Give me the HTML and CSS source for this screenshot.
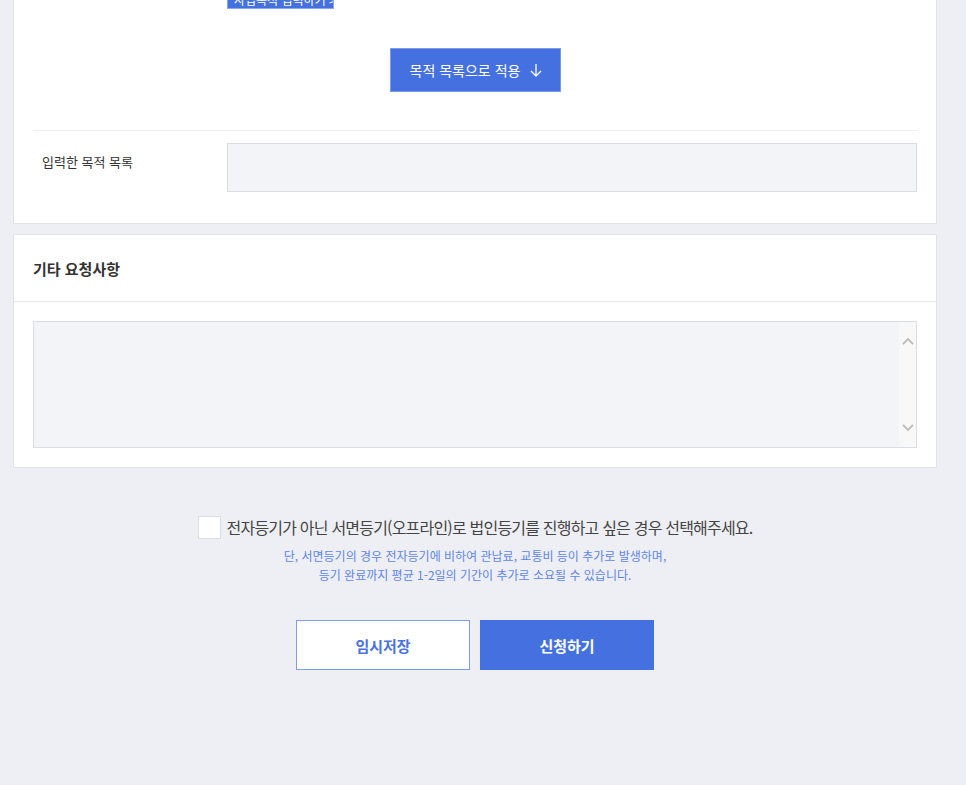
FILE: index.html
```html
<!DOCTYPE html>
<html lang="ko">
<head>
<meta charset="utf-8">
<link rel="stylesheet" href="styles.css">
</head>
<body>
<div class="page">
  <section class="card card-purpose">
    <div class="tag-row">
      <span class="tag">사업목적 입력하기 &gt;</span>
    </div>
    <div class="apply-row">
      <button class="apply-btn">목적 목록으로 적용
        <svg class="arrow" width="12" height="14" viewBox="0 0 12 14"><path d="M6 1v12M1 8l5 5 5-5" fill="none" stroke="#fff" stroke-width="1.3"/></svg>
      </button>
    </div>
    <div class="form-row">
      <div class="label">입력한 목적 목록</div>
      <div class="list-box"></div>
    </div>
  </section>

  <section class="card card-etc">
    <h2 class="card-title">기타 요청사항</h2>
    <div class="card-body">
      <div class="textarea">
        <div class="scroll">
          <svg width="12" height="8" viewBox="0 0 12 8"><path d="M1 7l5-5 5 5" fill="none" stroke="#bdbdbd" stroke-width="1.8"/></svg>
          <svg width="12" height="8" viewBox="0 0 12 8"><path d="M1 1l5 5 5-5" fill="none" stroke="#bdbdbd" stroke-width="1.8"/></svg>
        </div>
      </div>
    </div>
  </section>

  <div class="offline">
    <label class="check-row">
      <span class="checkbox"></span>
      <span class="check-text">전자등기가 아닌 서면등기(오프라인)로 법인등기를 진행하고 싶은 경우 선택해주세요.</span>
    </label>
    <p class="note">단, 서면등기의 경우 전자등기에 비하여 관납료, 교통비 등이 추가로 발생하며,<br>등기 완료까지 평균 1-2일의 기간이 추가로 소요될 수 있습니다.</p>
  </div>

  <div class="actions">
    <button class="btn btn-outline">임시저장</button>
    <button class="btn btn-primary">신청하기</button>
  </div>
</div>
</body>
</html>
```

FILE: styles.css
```css
* { box-sizing: border-box; }
html, body {
  margin: 0;
  padding: 0;
  background: #eeeff4;
  font-family: "Noto Sans CJK KR", "Noto Sans", sans-serif;
  color: #333;
}
.page {
  width: 966px;
  height: 785px;
  overflow: hidden;
  padding: 0 29px 0 13px;
}
.card {
  background: #fff;
  border: 1px solid #e2e3e9;
}
.card-purpose {
  margin-top: -31px;
  padding: 0 19px 31px;
}
.tag-row {
  padding-left: 194px;
  height: 39px;
  display: flex;
  align-items: flex-end;
}
.tag {
  display: inline-block;
  height: 20px;
  line-height: 20px;
  padding: 0 6px;
  background: #4571e0;
  border: 1px solid #8aa6ee;
  color: #fff;
  font-size: 12px;
  width: 107px;
  white-space: nowrap;
  overflow: hidden;
}
.apply-row {
  display: flex;
  justify-content: center;
  padding: 39px 0 38px;
  border-bottom: 1px solid #eeeff2;
}
.apply-btn {
  width: 171px;
  height: 44px;
  background: #4571e0;
  border: 1px solid #7b9bee;
  color: #fff;
  font-family: inherit;
  font-size: 14px;
  display: flex;
  align-items: center;
  justify-content: center;
  gap: 10px;
  padding: 0 0 0 2px;
}
.arrow { margin-top: -1px; }
.form-row {
  display: flex;
  padding-top: 12px;
}
.label {
  width: 194px;
  padding: 9px 0 0 9px;
  font-size: 13px;
  color: #333;
}
.list-box {
  flex: 1;
  height: 49px;
  background: #f3f4f8;
  border: 1px solid #dcdde3;
}
.card-etc {
  margin-top: 10px;
}
.card-title {
  margin: 0;
  height: 67px;
  padding: 0 19px;
  display: flex;
  align-items: center;
  font-size: 15px;
  font-weight: 700;
  color: #333;
  border-bottom: 1px solid #e6e7ec;
}
.card-body {
  padding: 19px 19px 19px;
}
.textarea {
  height: 127px;
  background: #f3f4f8;
  border: 1px solid #dcdde3;
  display: flex;
  justify-content: flex-end;
}
.scroll {
  width: 17px;
  background: #f8f8f8;
  display: flex;
  flex-direction: column;
  justify-content: space-between;
  align-items: center;
  padding: 15px 0 15px 0;
}
.offline {
  display: flex;
  flex-direction: column;
  align-items: center;
  padding-top: 47px;
}
.check-row {
  display: flex;
  align-items: center;
  gap: 6px;
}
.checkbox {
  width: 23px;
  height: 23px;
  background: #fff;
  border: 1px solid #dedfe5;
}
.check-text {
  font-size: 16px;
  color: #444;
  letter-spacing: -0.8px;
}
.note {
  margin: 7px 0 0;
  text-align: center;
  font-size: 12px;
  line-height: 19px;
  color: #5d86ea;
}
.actions {
  display: flex;
  justify-content: center;
  gap: 10px;
  padding-top: 36px;
}
.btn {
  width: 174px;
  height: 50px;
  font-family: inherit;
  font-size: 15px;
  font-weight: 700;
}
.btn-outline {
  background: #fff;
  border: 1px solid #7d9cec;
  color: #4a72e0;
}
.btn-primary {
  background: #4571e0;
  border: 1px solid #4571e0;
  color: #fff;
}
```
